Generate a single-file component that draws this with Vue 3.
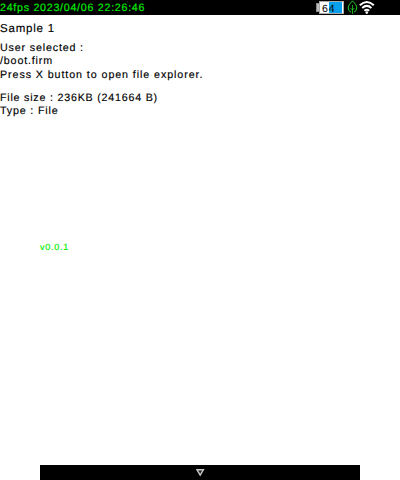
<script setup>
const fps = '24fps'
const time = '2023/04/06 22:26:46'
const battery = 64
</script>

<template>
  <main class="screen">
    <header class="status">
      <span class="clock">{{ fps }} {{ time }}</span>
      <div class="icons">
        <svg class="battery" width="30" height="15" viewBox="0 0 30 15" shape-rendering="crispEdges">
          <rect x="1" y="3" width="4" height="9" fill="#888" />
          <rect x="2" y="4" width="2" height="7" fill="#bbb" />
          <rect x="4" y="1" width="25" height="13" fill="#aaa" />
          <rect x="5" y="2" width="23" height="11" fill="#fff" />
          <rect x="14" y="2" width="13" height="11" fill="#08a0ea" />
          <text class="level" x="7" y="11.5" textLength="12.5">{{ battery }}</text>
        </svg>
        <svg width="14" height="15" viewBox="0 0 14 15" fill="none" stroke="#20d820" stroke-width="1">
          <path d="M7.5 .8 C5 3.5 3.2 5.5 3.2 8 Q3.2 11 6 12.2 M7.5 .8 C10 3.5 11.8 5.5 11.8 8 Q11.8 11 9 12.2" />
          <path d="M7.5 5V14M5.5 8L7.5 10L9.5 8" stroke-width=".8" />
        </svg>
        <svg width="16" height="15" viewBox="0 0 16 15" fill="none" stroke="#fff" stroke-width="2">
          <path d="M.8 5.2Q7.8-1.2 14.8 5.2M3.2 8Q7.8 3.8 12.4 8M5.4 10.7Q7.8 8.8 10.2 10.7" />
          <circle cx="7.8" cy="12.6" r="1.3" fill="#fff" stroke="none" />
        </svg>
      </div>
    </header>
    <h1>Sample 1</h1>
    <section class="info">
      <p>User selected :</p>
      <p>/boot.firm</p>
      <p class="hint">Press X button to open file explorer.</p>
    </section>
    <section class="info details">
      <p class="size">File size : 236KB (241664 B)</p>
      <p>Type : File</p>
    </section>
    <div class="version">v0.0.1</div>
    <footer class="drawer">
      <svg width="9" height="8" viewBox="0 0 9 8">
        <path d="M1 .8H7.4L4.2 6.2Z" fill="#222" stroke="#c8c8c8" stroke-width="1.4" />
      </svg>
    </footer>
  </main>
</template>

<style>
body { margin: 0; background: #fff; }
</style>

<style scoped>
.screen {
  width: 400px;
  height: 480px;
  display: flex;
  flex-direction: column;
  overflow: hidden;
  background: #fff;
  color: #000;
  font-family: "Liberation Sans", Arial, sans-serif;
  text-rendering: geometricPrecision;
  -webkit-text-stroke: 0.15px currentColor;
}
.status {
  height: 15px;
  flex: none;
  display: flex;
  justify-content: space-between;
  background: #000;
}
.clock {
  color: #00f000;
  font-size: 10.7px;
  line-height: 17px;
  letter-spacing: 0.72px;
  white-space: pre;
}
.icons { display: flex; padding-right: 25px; }
.icons svg { flex: none; }
.level {
  font-size: 10.5px;
  fill: #000;
}
h1 {
  margin: 7px 0 0;
  font-size: 11.5px;
  line-height: 15px;
  font-weight: 400;
  letter-spacing: 0.8px;
}
.info {
  margin-top: 5px;
  font-size: 10.7px;
  line-height: 13.4px;
  letter-spacing: 0.84px;
}
.info p { margin: 0; white-space: pre; }
.info .hint { letter-spacing: 0.92px; }
.info .size { letter-spacing: 0.78px; }
.details { margin-top: 9.6px; }
.version {
  margin: 122px 0 0 40px;
  color: #00f000;
  font-size: 9px;
  line-height: 12px;
  letter-spacing: 0.75px;
}
.drawer {
  width: 320px;
  height: 15px;
  margin: auto auto 0;
  display: flex;
  align-items: center;
  justify-content: center;
  background: #000;
}
</style>
